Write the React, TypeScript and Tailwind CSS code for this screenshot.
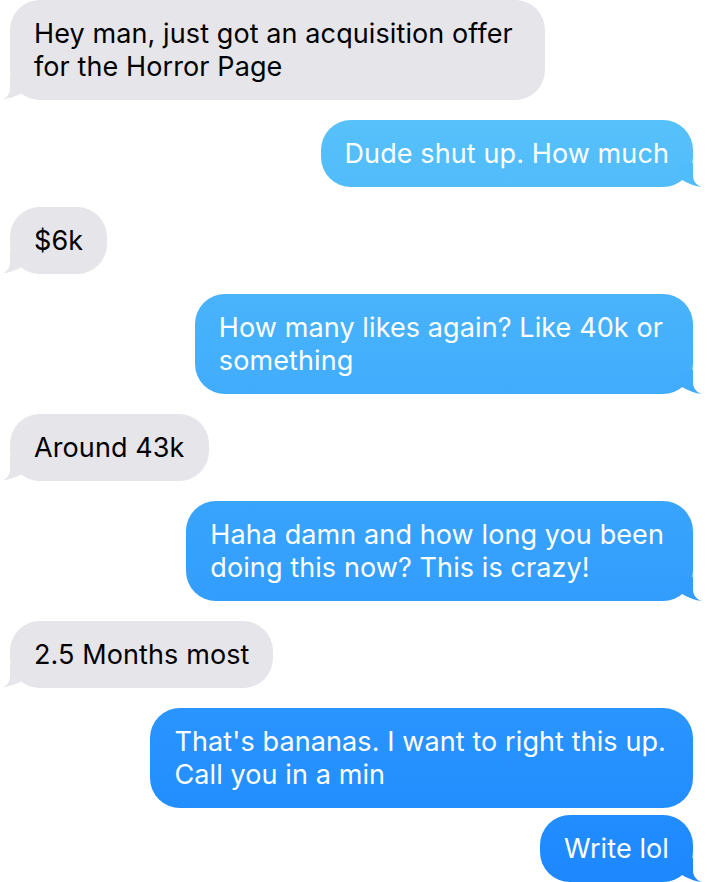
import React from "react";

type Msg = {
  from: "them" | "me";
  lines: string[];
  tail: boolean;
  gap: string;
  pad: string;
  bg: string;
  tailColor: string;
};

const messages: Msg[] = [
  {
    from: "them",
    lines: ["Hey man, just got an acquisition offer", "for the Horror Page"],
    tail: true,
    gap: "mt-0",
    pad: "pl-6 pr-[32px]",
    bg: "bg-[#e5e5ea]",
    tailColor: "#e5e5ea",
  },
  {
    from: "me",
    lines: ["Dude shut up. How much"],
    tail: true,
    gap: "mt-5",
    pad: "px-6",
    bg: "bg-linear-to-b from-[#56c1fa] to-[#51bcfa]",
    tailColor: "#51bcfa",
  },
  {
    from: "them",
    lines: ["$6k"],
    tail: true,
    gap: "mt-5",
    pad: "px-6",
    bg: "bg-[#e5e5ea]",
    tailColor: "#e5e5ea",
  },
  {
    from: "me",
    lines: ["How many likes again? Like 40k or", "something"],
    tail: true,
    gap: "mt-5",
    pad: "pl-6 pr-[30px]",
    bg: "bg-linear-to-b from-[#49b4fb] to-[#41acfc]",
    tailColor: "#41acfc",
  },
  {
    from: "them",
    lines: ["Around 43k"],
    tail: true,
    gap: "mt-5",
    pad: "px-6",
    bg: "bg-[#e5e5ea]",
    tailColor: "#e5e5ea",
  },
  {
    from: "me",
    lines: ["Haha damn and how long you been", "doing this now? This is crazy!"],
    tail: true,
    gap: "mt-5",
    pad: "pl-6 pr-[29px]",
    bg: "bg-linear-to-b from-[#39a4fc] to-[#329dfd]",
    tailColor: "#329dfd",
  },
  {
    from: "them",
    lines: ["2.5 Months most"],
    tail: true,
    gap: "mt-5",
    pad: "px-6",
    bg: "bg-[#e5e5ea]",
    tailColor: "#e5e5ea",
  },
  {
    from: "me",
    lines: ["That's bananas. I want to right this up.", "Call you in a min"],
    tail: false,
    gap: "mt-5",
    pad: "pl-6 pr-[27px]",
    bg: "bg-linear-to-b from-[#2a95fe] to-[#228efe]",
    tailColor: "#228efe",
  },
  {
    from: "me",
    lines: ["Write lol"],
    tail: true,
    gap: "mt-[7px]",
    pad: "px-6",
    bg: "bg-linear-to-b from-[#228dfe] to-[#1d88ff]",
    tailColor: "#1d88ff",
  },
];

const LeftTail = ({ color }: { color: string }) => (
  <svg
    className="absolute left-[-8px] bottom-0"
    width="24"
    height="24"
    viewBox="0 0 24 24"
  >
    <path
      d="M8 0 L8 12 C8 18 5 21.5 1 23 Q10 22.5 20 17 L20 0 Z"
      fill={color}
    />
  </svg>
);

const RightTail = ({ color }: { color: string }) => (
  <svg
    className="absolute right-[-10px] bottom-0"
    width="24"
    height="24"
    viewBox="0 0 24 24"
  >
    <path
      d="M14 0 L14 12 C14 18 17 22 23 24 Q13 23 2 16.5 L2 0 Z"
      fill={color}
    />
  </svg>
);

const Bubble = ({ msg }: { msg: Msg }) => {
  const mine = msg.from === "me";
  return (
    <div className={`flex ${mine ? "justify-end" : "justify-start"} ${msg.gap}`}>
      <div
        className={`relative rounded-[30px] py-[17px] ${msg.pad} ${msg.bg} ${
          mine ? "text-white" : "text-black"
        }`}
      >
        {msg.tail && !mine && <LeftTail color={msg.tailColor} />}
        {msg.tail && mine && <RightTail color={msg.tailColor} />}
        <div className="relative whitespace-nowrap text-[27px] leading-[33px] tracking-[0.1px]">
          {msg.lines.map((l, i) => (
            <div key={i}>{l}</div>
          ))}
        </div>
      </div>
    </div>
  );
};

export default function App() {
  return (
    <div
      className="min-h-screen w-full bg-white overflow-hidden pl-[10px] pr-[14px]"
      style={{ fontFamily: "Inter, 'Noto Sans', sans-serif" }}
    >
      {messages.map((m, i) => (
        <Bubble key={i} msg={m} />
      ))}
    </div>
  );
}
